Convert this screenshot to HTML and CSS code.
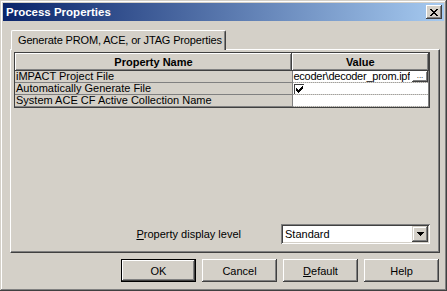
FILE: index.html
```html
<!DOCTYPE html>
<html lang="en">
<head>
    <meta charset="UTF-8">
    <meta name="viewport" content="width=device-width, initial-scale=1.0">
    <title>Process Properties</title>
    <link rel="stylesheet" href="styles.css">
</head>
<body>

    <div class="dialog">
        <div class="titlebar">
            <span class="title">Process Properties</span>
            <div class="close-btn">
                <svg width="8" height="7" viewBox="0 0 8 7" shape-rendering="crispEdges"><path d="M0 0h2v1H0zM6 0h2v1H6zM1 1h2v1H1zM5 1h2v1H5zM2 2h4v1H2zM3 3h2v1H3zM2 4h4v1H2zM1 5h2v1H1zM5 5h2v1H5zM0 6h2v1H0zM6 6h2v1H6z" fill="#000"/></svg>
            </div>
        </div>

        <div class="content">
            <div class="tabs">
                <div class="tab">Generate PROM, ACE, or JTAG Properties</div>
            </div>

            <div class="panel">
                <div class="grid-frame">
                    <table class="grid">
                        <colgroup>
                            <col class="name-col">
                            <col>
                        </colgroup>
                        <thead>
                            <tr><th>Property Name</th><th>Value</th></tr>
                        </thead>
                        <tbody>
                            <tr>
                                <td class="name">iMPACT Project File</td>
                                <td class="value">
                                    <div class="file-value">
                                        <div class="file-text"><span>ecoder\decoder_prom.ipf</span></div>
                                        <div class="browse">...</div>
                                    </div>
                                </td>
                            </tr>
                            <tr>
                                <td class="name">Automatically Generate File</td>
                                <td class="value">
                                    <div class="checkbox">
                                        <svg width="7" height="7" viewBox="0 0 7 7" shape-rendering="crispEdges"><path d="M6 0h1v1H6zM5 1h2v1H5zM0 2h1v1H0zM4 2h3v1H4zM0 3h2v1H0zM3 3h3v1H3zM0 4h5v1H0zM1 5h3v1H1zM2 6h1v1H2z" fill="#000"/></svg>
                                    </div>
                                </td>
                            </tr>
                            <tr>
                                <td class="name">System ACE CF Active Collection Name</td>
                                <td class="value"></td>
                            </tr>
                        </tbody>
                    </table>
                </div>

                <div class="level-row">
                    <label class="level-label"><u>P</u>roperty display level</label>
                    <div class="combo">
                        <span class="combo-text">Standard</span>
                        <div class="combo-arrow">
                            <svg width="7" height="4" viewBox="0 0 7 4" shape-rendering="crispEdges"><path d="M0 0h7v1H0zM1 1h5v1H1zM2 2h3v1H2zM3 3h1v1H3z" fill="#000"/></svg>
                        </div>
                    </div>
                </div>
            </div>

            <div class="buttons">
                <button class="btn default-btn">OK</button>
                <button class="btn">Cancel</button>
                <button class="btn"><u>D</u>efault</button>
                <button class="btn">Help</button>
            </div>
        </div>
    </div>

</body>
</html>
```

FILE: styles.css
```css
body {
    margin: 0;
    font-family: "Liberation Sans", Arial, sans-serif;
    font-size: 11px;
    color: #000;
    background-color: #d4d0c8;
}

.dialog {
    width: 447px;
    height: 291px;
    box-sizing: border-box;
    padding: 3px;
    display: flex;
    flex-direction: column;
    background-color: #d4d0c8;
    box-shadow: inset -1px -1px #404040, inset 1px 1px #d4d0c8,
                inset -2px -2px #808080, inset 2px 2px #fff;
}

.titlebar {
    height: 18px;
    flex: none;
    display: flex;
    align-items: center;
    justify-content: space-between;
    padding: 0 2px 0 3px;
    background: linear-gradient(to right, #0a246a, #a6caf0);
}

.title {
    color: #fff;
    font-weight: bold;
    font-size: 11.5px;
}

.close-btn {
    width: 16px;
    height: 14px;
    display: flex;
    align-items: center;
    justify-content: center;
    background-color: #d4d0c8;
    box-shadow: inset -1px -1px #404040, inset 1px 1px #fff,
                inset -2px -2px #808080, inset 2px 2px #d4d0c8;
}

.content {
    flex: 1;
    display: flex;
    flex-direction: column;
    padding: 9px 4px 0 7px;
}

.tabs {
    display: flex;
    padding-left: 1px;
    margin-bottom: -1px;
    position: relative;
    z-index: 1;
}

.tab {
    width: 215px;
    height: 20px;
    box-sizing: border-box;
    line-height: 18px;
    padding-left: 6px;
    letter-spacing: -0.15px;
    white-space: nowrap;
    background-color: #d4d0c8;
    border-top: 1px solid #fff;
    border-left: 1px solid #fff;
    border-right: 1px solid #404040;
    border-radius: 2px 2px 0 0;
    box-shadow: inset -1px 0 #808080;
}

.panel {
    height: 204px;
    box-sizing: border-box;
    display: flex;
    flex-direction: column;
    justify-content: space-between;
    padding: 2px 9px 8px 3px;
    border: 1px solid;
    border-color: #fff #404040 #404040 #fff;
    box-shadow: inset -1px -1px #808080;
}

.grid-frame {
    border: 1px solid #404040;
}

.grid {
    width: 100%;
    border-collapse: collapse;
    table-layout: fixed;
}

.name-col {
    width: 277px;
}

.grid th {
    height: 18px;
    padding: 0;
    font-weight: bold;
    text-align: center;
    background-color: #d4d0c8;
    box-shadow: inset -1px -1px #404040, inset 1px 1px #fff,
                inset -2px -2px #808080;
}

.grid td {
    height: 10px;
    line-height: 11px;
    padding: 0;
    white-space: nowrap;
    overflow: hidden;
    border-bottom: 1px solid #808080;
    border-right: 1px solid #808080;
}

.grid td.name {
    padding-left: 1px;
}

.grid td.value {
    background-color: #fff;
    border-bottom: 1px dotted #a0a0a0;
}

.file-value {
    display: flex;
    align-items: center;
    height: 10px;
}

.file-text {
    flex: 1;
    display: flex;
    justify-content: flex-end;
    overflow: hidden;
    white-space: nowrap;
    letter-spacing: -0.25px;
}

.browse {
    width: 16px;
    height: 11px;
    margin-left: 2px;
    box-sizing: border-box;
    font-size: 8px;
    line-height: 9px;
    text-align: center;
    background-color: #fff;
    box-shadow: inset -1px -1px #404040, inset 1px 1px #fff,
                inset -2px -2px #808080;
}

.checkbox {
    width: 10px;
    height: 10px;
    margin-left: 1px;
    box-sizing: border-box;
    display: flex;
    align-items: center;
    justify-content: center;
    background-color: #fff;
    border-top: 1px solid #404040;
    border-left: 1px solid #404040;
}

.level-row {
    display: flex;
    align-items: center;
    justify-content: flex-end;
    gap: 40px;
}

.combo {
    width: 149px;
    height: 20px;
    box-sizing: border-box;
    display: flex;
    align-items: center;
    padding: 2px;
    background-color: #fff;
    box-shadow: inset 1px 1px #808080, inset -1px -1px #fff,
                inset 2px 2px #404040, inset -2px -2px #d4d0c8;
}

.combo-text {
    flex: 1;
    padding-left: 2px;
}

.combo-arrow {
    width: 16px;
    height: 16px;
    display: flex;
    align-items: center;
    justify-content: center;
    background-color: #d4d0c8;
    box-shadow: inset -1px -1px #404040, inset 1px 1px #d4d0c8,
                inset -2px -2px #808080, inset 2px 2px #fff;
}

.buttons {
    display: flex;
    justify-content: flex-end;
    gap: 6px;
    padding: 6px 1px 0 0;
}

.btn {
    width: 75px;
    height: 23px;
    padding: 0;
    font-family: inherit;
    font-size: 11px;
    color: #000;
    background-color: #d4d0c8;
    border: none;
    box-shadow: inset -1px -1px #404040, inset 1px 1px #fff,
                inset -2px -2px #808080, inset 2px 2px #d4d0c8;
}

.default-btn {
    border: 1px solid #000;
}
```
